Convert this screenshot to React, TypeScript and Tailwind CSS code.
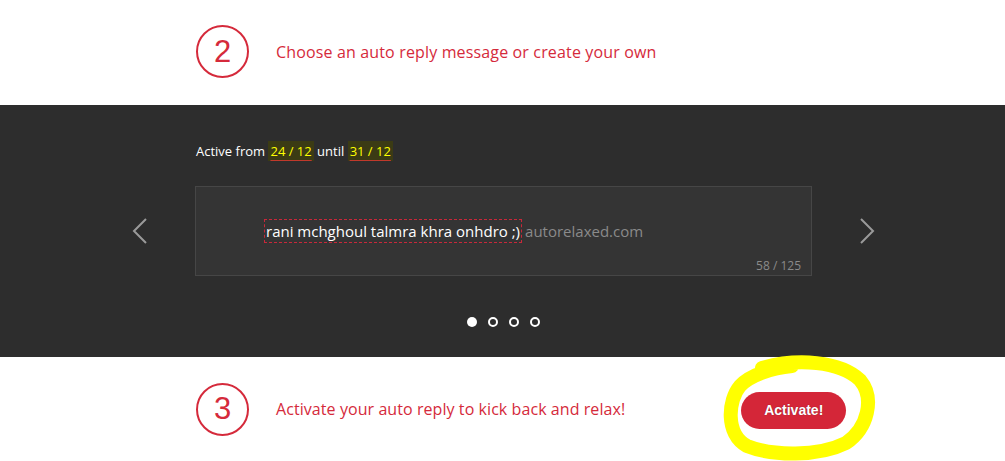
import React from "react";

const red = "text-[#d52a3b]";

const StepCircle = ({ n }: { n: string }) => (
  <div className="w-[53px] h-[53px] rounded-full border-[2.5px] border-[#d52a3b] flex items-center justify-center shrink-0">
    <span className={`${red} text-[31px] leading-none font-['Liberation_Sans',sans-serif] -mt-[1px]`}>
      {n}
    </span>
  </div>
);

const Hl = ({ children }: { children: React.ReactNode }) => (
  <span className="bg-[#3b3b14] text-[#ffff00] px-[2px] py-[1px] underline decoration-[#c0392b] underline-offset-[4px]">
    {children}
  </span>
);

const Chevron = ({ dir }: { dir: "left" | "right" }) => (
  <svg width="16" height="26" viewBox="0 0 16 26" fill="none">
    <path
      d={dir === "left" ? "M14 1 L2 13 L14 25" : "M2 1 L14 13 L2 25"}
      stroke="#9a9a9a"
      strokeWidth="2"
    />
  </svg>
);

export default function App() {
  return (
    <div className="w-[1005px] h-[461px] overflow-hidden bg-white font-['Open_Sans',sans-serif] relative">
      {/* step 2 */}
      <div className="h-[105px] flex items-center pl-[196px] pb-[2px]">
        <StepCircle n="2" />
        <p className={`${red} text-[16px] tracking-[0.15px] ml-[27px]`}>
          Choose an auto reply message or create your own
        </p>
      </div>

      {/* message slider */}
      <div className="h-[252px] bg-[#2d2d2d] flex flex-col">
        <div className="pl-[196px] pt-[36px] h-[81px]">
          <p className="text-white text-[13px] leading-[20px] font-medium">
            Active from <Hl>24 / 12</Hl> until <Hl>31 / 12</Hl>
          </p>
        </div>
        <div className="flex items-center">
          <div className="w-[195px] pl-[132px]">
            <Chevron dir="left" />
          </div>
          <div className="w-[617px] h-[90px] bg-[#343434] border border-[#464646] relative flex items-center pl-[69px]">
            <span className="text-white text-[15px] leading-[22px] outline-dashed outline-1 outline-[#c8283a] px-[1px]">
              rani mchghoul talmra khra onhdro ;)
            </span>
            <span className="text-[#8a8a8a] text-[15px] ml-[4px]">autorelaxed.com</span>
            <span className="absolute right-[10px] bottom-[0px] text-[12px] text-[#8a8a8a]">58 / 125</span>
          </div>
          <div className="pl-[47px]">
            <Chevron dir="right" />
          </div>
        </div>
        <div className="flex justify-center gap-[11px] mt-[41px] ml-[1px]">
          <span className="w-[10px] h-[10px] rounded-full bg-white" />
          <span className="w-[10px] h-[10px] rounded-full border-2 border-white" />
          <span className="w-[10px] h-[10px] rounded-full border-2 border-white" />
          <span className="w-[10px] h-[10px] rounded-full border-2 border-white" />
        </div>
      </div>

      {/* step 3 */}
      <div className="h-[104px] flex items-center pl-[196px]">
        <StepCircle n="3" />
        <p className={`${red} text-[16px] tracking-[0.07px] ml-[27px]`}>
          Activate your auto reply to kick back and relax!
        </p>
        <button className="ml-[116px] mt-[3px] w-[105px] h-[37px] rounded-full bg-[#d42638] text-white font-bold text-[14px] font-['Liberation_Sans',sans-serif] [text-shadow:0_0_1px_rgba(0,0,0,0.4)]">
          Activate!
        </button>
      </div>

      {/* yellow annotation */}
      <svg className="absolute left-0 top-0 pointer-events-none" width="1005" height="461">
        <path
          d="M762 368 C797 358 840 361 860 380 C875 398 868 428 846 443 C818 457 772 456 747 446 C725 434 728 400 740 386 C750 375 772 368 792 366"
          fill="none"
          stroke="#ffff00"
          strokeWidth="14"
          strokeLinecap="round"
        />
      </svg>
    </div>
  );
}
